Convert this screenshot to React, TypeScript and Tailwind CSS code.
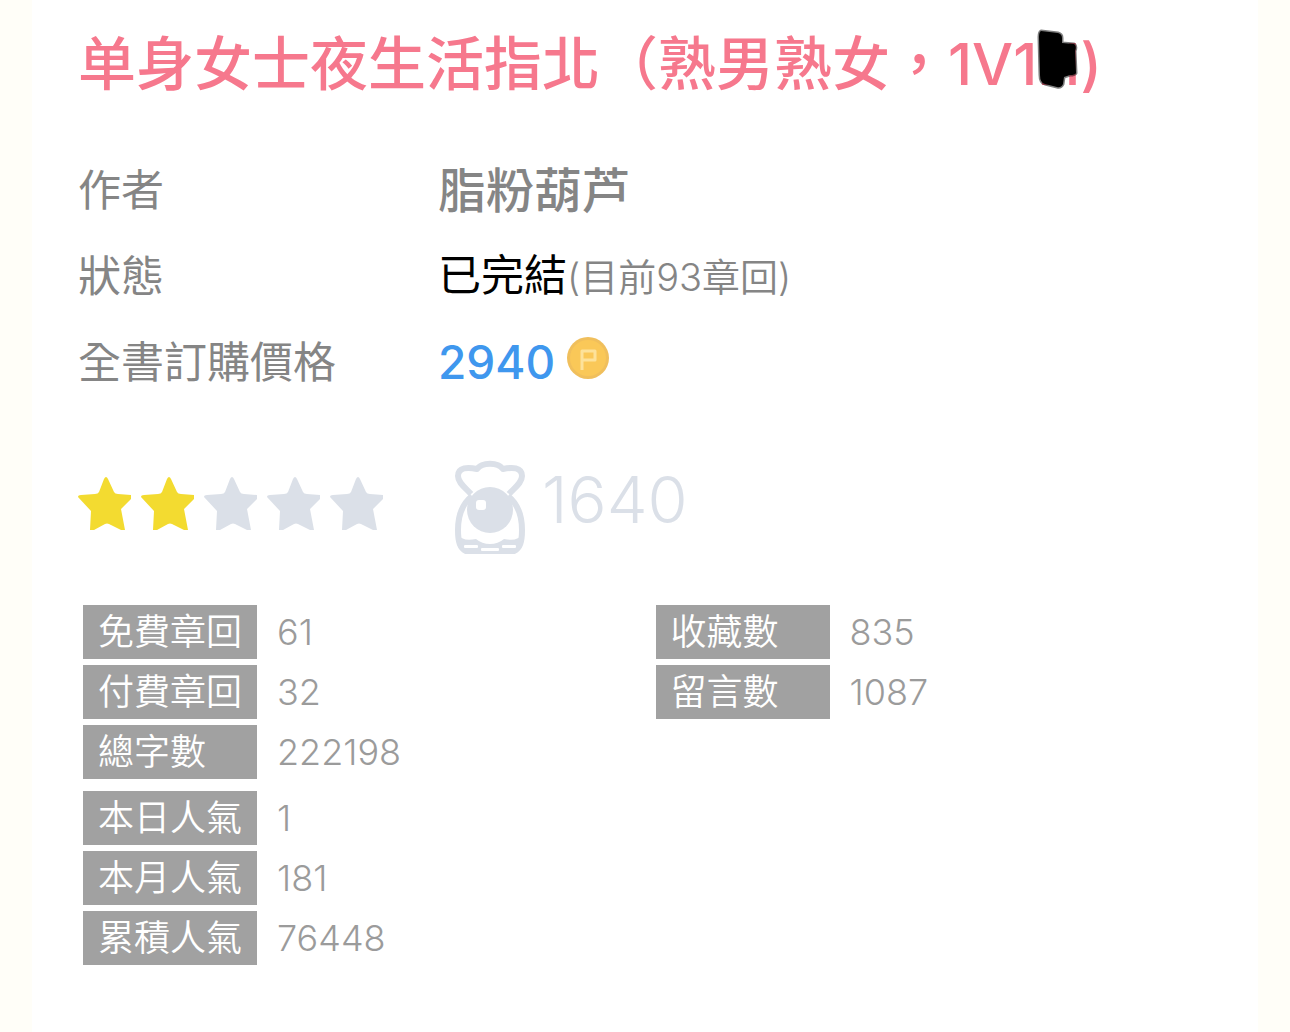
import React from "react";

type StatProps = {
  label: string;
  value: string;
};

const Stat: React.FC<StatProps> = ({ label, value }) => {
  return (
    <div className="flex items-center gap-5">
      <dt className="w-[174px] h-[54px] pl-[15px] bg-[#a1a1a1] text-white font-[350]">
        {label}
      </dt>
      <dd>{value}</dd>
    </div>
  );
};

const Star: React.FC<{ filled: boolean }> = ({ filled }) => {
  return (
    <svg
      viewBox="0 0 54 53"
      className={
        filled ? "w-[54px] h-[53px] text-[#f3db30]" : "w-[54px] h-[53px] text-[#dbe0e8]"
      }
      aria-hidden="true"
    >
      <path
        fill="currentColor"
        d="M28 0 Q29 0 30 2 L36 15 Q37 17 40 17 L53 18 V22 L43 32 L47 53 H43 L31 47 Q29 46 27 47 L16 53 H12 L13 34 L0 20 Q0 18 3 18 L17 17 Q20 17 21 15 L26 2 Q27 0 28 0 Z"
      />
    </svg>
  );
};

const Coin: React.FC = () => {
  return (
    <svg
      viewBox="0 0 42 42"
      className="ml-3 inline align-baseline size-[42px]"
      aria-hidden="true"
    >
      <circle cx="21" cy="21" r="21" fill="#f0bf5c" />
      <circle cx="21" cy="21" r="18" fill="#fac858" />
      <path
        d="M15 33 V14 H28 V23 H15"
        fill="none"
        stroke="#fde29a"
        strokeWidth="3"
        strokeLinejoin="round"
      />
    </svg>
  );
};

const PearlIcon: React.FC = () => {
  return (
    <svg viewBox="0 0 72 94" className="w-[72px] h-[94px]" aria-hidden="true">
      <g fill="none" stroke="#dbe0e8" strokeWidth="6" strokeLinejoin="round">
        <path d="M17 34 C12 28 4 23 4 16 C4 7 14 7 23 9 C28 2 44 2 49 9 C58 7 68 7 68 16 C68 23 60 28 55 34" />
        <path d="M18 36 C8 44 4 56 4 70 C4 82 6 88 12 91 H60 C66 88 68 82 68 70 C68 56 64 44 54 36" />
      </g>
      <path
        d="M4 74 Q8 82 22 79 Q28 84 36 84 Q44 84 50 79 Q64 82 68 74 L66 88 L60 94 H12 L6 88 Z"
        fill="#dbe0e8"
      />
      <circle cx="36" cy="50" r="23" fill="#dbe0e8" />
      <g fill="#fff">
        <rect x="22" y="40" width="10" height="10" rx="3" />
        <rect x="10" y="85" width="14" height="3" rx="1" />
        <rect x="27" y="88" width="18" height="3" rx="1" />
        <rect x="48" y="85" width="14" height="3" rx="1" />
      </g>
    </svg>
  );
};

const chapterStats = [
  { label: "免費章回", value: "61" },
  { label: "付費章回", value: "32" },
  { label: "總字數", value: "222198" },
];

const popularityStats = [
  { label: "本日人氣", value: "1" },
  { label: "本月人氣", value: "181" },
  { label: "累積人氣", value: "76448" },
];

const readerStats = [
  { label: "收藏數", value: "835" },
  { label: "留言數", value: "1087" },
];

const App: React.FC = () => {
  return (
    <div className="min-h-screen px-8 bg-[#fffef8] font-[Inter,'Noto_Sans_CJK_TC',sans-serif]">
      <main className="min-h-screen bg-white px-[46px] pt-6 pb-16 text-[#858585]">
        <h1 className="text-[58px] leading-[80px] font-medium text-[#f6788d]">
          单身女士夜生活指北（熟男熟女，1V1
          <span className="relative">
            H
            {/* marker scribble over the last letter */}
            <svg
              viewBox="0 0 42 60"
              className="absolute left-0 top-0 w-[42px] h-[60px]"
              aria-hidden="true"
            >
              <path
                d="M4 2 L21 4 Q25 5 25 9 V14 L37 15 Q40 17 38 22 L39 44 Q38 46 33 46 L27 48 L26 55 Q24 59 20 58 L8 55 Q3 54 3 46 L2 8 Q2 3 4 2 Z"
                fill="#000"
                stroke="#000"
                strokeOpacity="0.5"
                strokeWidth="3"
                strokeLinejoin="round"
              />
            </svg>
          </span>
          )
        </h1>

        <dl className="mt-[44px] grid grid-cols-[360px_1fr] items-center text-[43px] leading-[85px]">
          <dt>作者</dt>
          <dd className="text-[48px] font-medium">脂粉葫芦</dd>
          <dt>狀態</dt>
          <dd>
            <span className="text-black">已完結</span>
            <span className="text-[38px] font-[350]">(目前93章回)</span>
          </dd>
          <dt>全書訂購價格</dt>
          <dd className="text-[46px] font-medium text-[#3f97ee]">
            2940
            <Coin />
          </dd>
        </dl>

        <div className="mt-[55px] flex items-center">
          <div className="flex gap-[9px] pb-2" role="img" aria-label="2 / 5">
            {[1, 2, 3, 4, 5].map((n) => (
              <Star key={n} filled={n <= 2} />
            ))}
          </div>
          <div className="ml-[70px] flex items-center gap-4 text-[65px] leading-none font-light text-[#dbe0e8]">
            <PearlIcon />
            <span className="pb-4">1640</span>
          </div>
        </div>

        <div className="mt-[51px] -mr-4 pl-[5px] grid grid-cols-2 items-start text-[36px] leading-[54px] font-light text-[#9b9b9b]">
          <div className="flex flex-col gap-3">
            <dl className="flex flex-col gap-[6px]">
              {chapterStats.map((stat) => (
                <Stat key={stat.label} {...stat} />
              ))}
            </dl>
            <dl className="flex flex-col gap-[6px]">
              {popularityStats.map((stat) => (
                <Stat key={stat.label} {...stat} />
              ))}
            </dl>
          </div>
          <dl className="flex flex-col gap-[6px]">
            {readerStats.map((stat) => (
              <Stat key={stat.label} {...stat} />
            ))}
          </dl>
        </div>
      </main>
    </div>
  );
};

export default App;
